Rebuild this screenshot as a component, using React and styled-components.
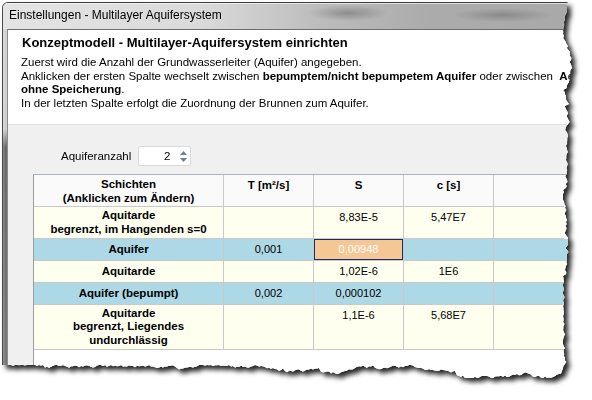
import React from 'react'
import styled, { createGlobalStyle } from 'styled-components'

const GlobalStyle = createGlobalStyle`
  html, body {
    margin: 0;
    padding: 0;
    background: #ffffff;
  }
`

const PAPER_W = 570
const PAPER_H = 376

// seeded random so the torn edge is the same every time
const makeRandom = seed => {
  let s = seed
  return () => {
    s = (s * 16807) % 2147483647
    return (s - 1) / 2147483646
  }
}

const tornEdge = (w, h) => {
  const rnd = makeRandom(11)
  const pts = ['0px 0px']
  let x = w - 4
  pts.push(`${x}px 0px`)
  for (let y = 2; y < h - 8; y += 2) {
    x += (rnd() - 0.5) * 3.2
    if (rnd() > 0.93) x -= 3
    x = Math.max(w - 9, Math.min(w, x))
    pts.push(`${x.toFixed(1)}px ${y}px`)
  }
  let y = h - 6
  for (let xx = Math.round(x) - 2; xx > 0; xx -= 2) {
    y += (rnd() - 0.5) * 3.2
    if (rnd() > 0.93) y -= 3
    y = Math.max(h - 13, Math.min(h, y))
    pts.push(`${xx}px ${y.toFixed(1)}px`)
  }
  pts.push(`0px ${y.toFixed(1)}px`)
  return `polygon(${pts.join(', ')})`
}

const TORN = tornEdge(PAPER_W, PAPER_H)

const Stage = styled.div`
  width: 592px;
  height: 400px;
  padding: 2px 0 0 2px;
  box-sizing: border-box;
  background: #ffffff;
  overflow: hidden;
`

const ShadowWrap = styled.div`
  width: ${PAPER_W}px;
  height: ${PAPER_H}px;
  filter: drop-shadow(4px 4px 2.5px rgba(0, 0, 0, 0.85));
`

const Paper = styled.div`
  width: 100%;
  height: 100%;
  box-sizing: border-box;
  border-top: 1px solid #3f3f3f;
  border-left: 1px solid #4a4a4a;
  border-radius: 6px 0 0 0;
  overflow: hidden;
  display: flex;
  flex-direction: column;
  background: #d6d6d6;
`

const TitleBar = styled.div`
  height: 26px;
  flex: none;
  box-sizing: border-box;
  padding: 0 0 2px 6px;
  line-height: 24px;
  font-family: 'Liberation Sans', Arial, sans-serif;
  font-size: 12px;
  color: #000;
  white-space: nowrap;
  background:
    radial-gradient(ellipse 40px 8px at 345px 10px, rgba(90, 90, 90, 0.45), transparent),
    radial-gradient(ellipse 50px 7px at 500px 12px, rgba(90, 90, 90, 0.4), transparent),
    linear-gradient(90deg, #e4e4e4 0%, #dadada 35%, #bdbdbd 55%, #ababab 75%, #a9a9a9 100%);
  box-shadow: inset 0 1px 0 rgba(255, 255, 255, 0.6);
`

const Body = styled.div`
  flex: 1;
  display: flex;
  min-height: 0;
`

const LeftFrame = styled.div`
  width: 4px;
  flex: none;
  background:
    linear-gradient(90deg, rgba(255, 255, 255, 0.2), rgba(0, 0, 0, 0) 60%),
    linear-gradient(180deg, #d2d2d2 0, #cfcfcf 100px, #6a6a6a 118px, #7a7a7a 100%);
`

const Client = styled.div`
  flex: 1;
  display: flex;
  flex-direction: column;
  min-width: 0;
  border-top: 1px solid #6d6d6d;
  border-left: 1px solid #8c8c8c;
  background: #f0f0f0;
`

const Header = styled.div`
  height: 95px;
  flex: none;
  box-sizing: border-box;
  padding: 5px 0 0 14px;
  background: #ffffff;
  border-bottom: 1px solid #e2e2e2;
  font-family: 'Liberation Sans', Arial, sans-serif;
  color: #000;
  white-space: nowrap;
`

const Headline = styled.div`
  font-size: 13px;
  font-weight: bold;
  line-height: 15px;
`

const Description = styled.div`
  margin-top: 6px;
  margin-left: -1px;
  font-size: 11.5px;
  line-height: 13.5px;
`

const Content = styled.div`
  flex: 1;
  display: flex;
  flex-direction: column;
  padding: 21px 0 0 25px;
  min-height: 0;
`

const CountRow = styled.div`
  display: flex;
  align-items: center;
  gap: 7px;
  padding-left: 28px;
  font-family: 'Liberation Sans', Arial, sans-serif;
  font-size: 11.5px;
  color: #000;
`

const Spinner = styled.div`
  width: 53px;
  height: 20px;
  box-sizing: border-box;
  display: flex;
  align-items: center;
  justify-content: flex-end;
  background: #fff;
  border: 1px solid #dadada;
  border-radius: 2px;
`

const SpinValue = styled.span`
  padding-right: 6px;
`

const SpinArrows = styled.div`
  width: 14px;
  height: 100%;
  display: flex;
  flex-direction: column;
  align-items: center;
  justify-content: center;
  gap: 3px;
`

const Grid = styled.div`
  flex: 1;
  margin-top: 8px;
  background: #ffffff;
  border-top: 1px solid #a9b2bf;
  border-left: 1px solid #9d9d9d;
  font-family: 'Liberation Sans', Arial, sans-serif;
  color: #000;
`

const rowColors = {
  head: '#fafafa',
  tard: '#fffff0',
  fer: '#add8e6'
}

const Row = styled.div`
  display: flex;
  height: ${p => p.$h}px;
  background: ${p => rowColors[p.$kind]};
`

const Cell = styled.div`
  width: ${p => p.$w}px;
  flex: none;
  box-sizing: border-box;
  border-right: ${p => (p.$last ? 'none' : '1px solid #c9c9c9')};
  border-bottom: 1px solid #c9c9c9;
  text-align: center;
  white-space: nowrap;
`

const LabelCell = styled(Cell)`
  display: flex;
  flex-direction: column;
  justify-content: center;
  font-weight: bold;
  font-size: 11.5px;
  line-height: ${p => (p.$head ? 14 : 13.5)}px;
`

const ValueCell = styled(Cell)`
  padding-top: 4px;
  font-size: ${p => (p.$head ? 11.5 : 11)}px;
  font-weight: ${p => (p.$head ? 'bold' : 'normal')};
  line-height: 13px;
  background: ${p => (p.$selected ? '#f5c795' : 'transparent')};
  color: ${p => (p.$selected ? '#ffffff' : '#000')};
  box-shadow: ${p => (p.$selected ? 'inset 0 0 0 1px #1e2a6a' : 'none')};
`

const widths = [190, 90, 90, 90, 70]

const rows = [
  { kind: 'head', h: 32, label: ['Schichten', '(Anklicken zum Ändern)'], values: ['T [m²/s]', 'S', 'c [s]', ''] },
  { kind: 'tard', h: 32, label: ['Aquitarde', 'begrenzt, im Hangenden s=0'], values: ['', '8,83E-5', '5,47E7', ''] },
  { kind: 'fer', h: 22, label: ['Aquifer'], values: ['0,001', '0,00948', '', ''], selected: 1 },
  { kind: 'tard', h: 22, label: ['Aquitarde'], values: ['', '1,02E-6', '1E6', ''] },
  { kind: 'fer', h: 22, label: ['Aquifer (bepumpt)'], values: ['0,002', '0,000102', '', ''] },
  { kind: 'tard', h: 45, label: ['Aquitarde', 'begrenzt, Liegendes', 'undurchlässig'], values: ['', '1,1E-6', '5,68E7', ''] }
]

const Arrow = ({ down }) => (
  <svg width="7" height="4" viewBox="0 0 7 4">
    <path d={down ? 'M0 0 L7 0 L3.5 4 Z' : 'M0 4 L7 4 L3.5 0 Z'} fill="#6b7ea6" />
  </svg>
)

const App = () => {
  return (
    <Stage>
      <GlobalStyle />
      <ShadowWrap>
        <Paper style={{ clipPath: TORN }}>
          <TitleBar>Einstellungen - Multilayer Aquifersystem</TitleBar>
          <Body>
            <LeftFrame />
            <Client>
              <Header>
                <Headline>Konzeptmodell - Multilayer-Aquifersystem einrichten</Headline>
                <Description>
                  <div>Zuerst wird die Anzahl der Grundwasserleiter (Aquifer) angegeben.</div>
                  <div>
                    Anklicken der ersten Spalte wechselt zwischen <b>bepumptem/nicht bepumpetem Aquifer</b> oder
                    zwischen&nbsp; <b>Aq</b>
                  </div>
                  <div>
                    <b>ohne Speicherung</b>.
                  </div>
                  <div>In der letzten Spalte erfolgt die Zuordnung der Brunnen zum Aquifer.</div>
                </Description>
              </Header>
              <Content>
                <CountRow>
                  <span>Aquiferanzahl</span>
                  <Spinner>
                    <SpinValue>2</SpinValue>
                    <SpinArrows>
                      <Arrow />
                      <Arrow down />
                    </SpinArrows>
                  </Spinner>
                </CountRow>
                <Grid>
                  {rows.map((r, i) => (
                    <Row key={i} $kind={r.kind} $h={r.h}>
                      <LabelCell $w={widths[0]} $head={r.kind === 'head'}>
                        {r.label.map(l => (
                          <div key={l}>{l}</div>
                        ))}
                      </LabelCell>
                      {r.values.map((v, j) => (
                        <ValueCell
                          key={j}
                          $w={widths[j + 1]}
                          $last={j === 3}
                          $head={r.kind === 'head'}
                          $selected={r.selected === j}
                        >
                          {v}
                        </ValueCell>
                      ))}
                    </Row>
                  ))}
                </Grid>
              </Content>
            </Client>
          </Body>
        </Paper>
      </ShadowWrap>
    </Stage>
  )
}

export default App
